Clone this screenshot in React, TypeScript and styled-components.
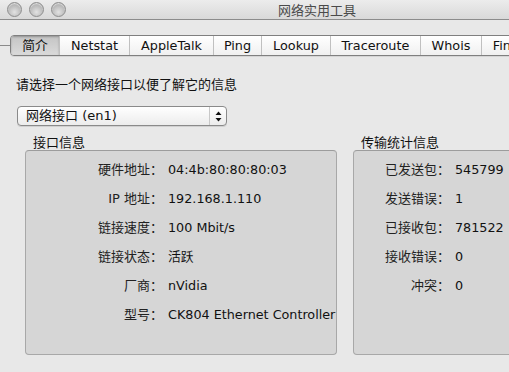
import * as React from "react";
import styled, { createGlobalStyle } from "styled-components";

const GlobalStyle = createGlobalStyle`
  html, body {
    margin: 0;
    padding: 0;
    overflow: hidden;
    background: #e8e8e8;
  }
  body {
    font-family: "DejaVu Sans", "Noto Sans CJK SC", sans-serif;
    font-size: 13px;
    color: #111;
  }
`;

type Row = { label: string; value: string };

const tabs = [
  { name: "简介", w: 48, active: true },
  { name: "Netstat", w: 70 },
  { name: "AppleTalk", w: 84 },
  { name: "Ping", w: 48 },
  { name: "Lookup", w: 69 },
  { name: "Traceroute", w: 90 },
  { name: "Whois", w: 61 },
  { name: "Finger", w: 62 },
];

const interfaceRows: Row[] = [
  { label: "硬件地址：", value: "04:4b:80:80:80:03" },
  { label: "IP 地址：", value: "192.168.1.110" },
  { label: "链接速度：", value: "100 Mbit/s" },
  { label: "链接状态：", value: "活跃" },
  { label: "厂商：", value: "nVidia" },
  { label: "型号：", value: "CK804 Ethernet Controller" },
];

const statRows: Row[] = [
  { label: "已发送包：", value: "545799" },
  { label: "发送错误：", value: "1" },
  { label: "已接收包：", value: "781522" },
  { label: "接收错误：", value: "0" },
  { label: "冲突：", value: "0" },
];

export default function App() {
  return (
    <>
      <GlobalStyle />
      <Window>
        <TitleBar>
          <Lights>
            <Light />
            <Light />
            <Light />
          </Lights>
          <Title>网络实用工具</Title>
        </TitleBar>

        <Body>
          <TabStrip>
            <Leader />
            <Segments>
              {tabs.map((t) => (
                <Tab key={t.name} $w={t.w} $active={!!t.active}>
                  {t.name}
                </Tab>
              ))}
            </Segments>
          </TabStrip>

          <Prompt>请选择一个网络接口以便了解它的信息</Prompt>

          <Popup>
            <PopupText>网络接口 (en1)</PopupText>
            <Stepper>
              <svg width="7" height="11" viewBox="0 0 7 11">
                <path d="M3.5 0.5 L6.5 4 L0.5 4 Z" fill="#111" />
                <path d="M3.5 10.5 L6.5 7 L0.5 7 Z" fill="#111" />
              </svg>
            </Stepper>
          </Popup>

          <Panels>
            <Group>
              <GroupLabel>接口信息</GroupLabel>
              <Box $w={312} $labelW={137}>
                {interfaceRows.map((r) => (
                  <React.Fragment key={r.label}>
                    <Label>{r.label}</Label>
                    <Value>{r.value}</Value>
                  </React.Fragment>
                ))}
              </Box>
            </Group>
            <Group>
              <GroupLabel>传输统计信息</GroupLabel>
              <Box $w={270} $labelW={96}>
                {statRows.map((r) => (
                  <React.Fragment key={r.label}>
                    <Label>{r.label}</Label>
                    <Value>{r.value}</Value>
                  </React.Fragment>
                ))}
              </Box>
            </Group>
          </Panels>
        </Body>
      </Window>
    </>
  );
}

const Window = styled.div`
  width: 634px;
  height: 372px;
  background: #e8e8e8;
  overflow: hidden;
`;

const TitleBar = styled.div`
  position: relative;
  height: 19px;
  display: flex;
  align-items: center;
  background: linear-gradient(#ececec, #d9d9d9);
  border-bottom: 1px solid #8c8c8c;
`;

const Lights = styled.div`
  display: flex;
  gap: 7px;
  padding-left: 7px;
`;

const Light = styled.div`
  width: 13px;
  height: 13px;
  border-radius: 50%;
  border: 1px solid #8e8e8e;
  background: radial-gradient(circle at 50% 70%, #e2e2e2 0%, #b9b9b9 60%, #a5a5a5 100%);
  box-shadow: inset 0 1px 1px rgba(255, 255, 255, 0.6);
`;

const Title = styled.div`
  position: absolute;
  left: 0;
  right: 0;
  text-align: center;
  font-family: "Noto Sans CJK SC", sans-serif;
  font-size: 13px;
  line-height: 19px;
  color: #4a4a4a;
`;

const Body = styled.div`
  padding-top: 15px;
`;

const TabStrip = styled.div`
  display: flex;
  align-items: center;
`;

const Leader = styled.div`
  width: 10px;
  height: 1px;
  background: #8a8a8a;
`;

const Segments = styled.div`
  display: flex;
  height: 19px;
  border: 1px solid #7f7f7f;
  border-radius: 4px;
  overflow: hidden;
  background: linear-gradient(#ffffff, #f0f0f0);
  box-shadow: 0 1px 0 rgba(0, 0, 0, 0.08);
`;

const Tab = styled.div<{ $w: number; $active: boolean }>`
  flex: none;
  width: ${(p) => p.$w}px;
  box-sizing: border-box;
  display: flex;
  align-items: center;
  justify-content: center;
  line-height: 19px;
  font-size: 12.8px;
  color: #111;
  border-left: 1px solid #c0c0c0;
  background: ${(p) =>
    p.$active ? "linear-gradient(#c4c4c4, #dadada)" : "transparent"};
  box-shadow: ${(p) => (p.$active ? "inset 0 1px 2px rgba(0,0,0,0.25)" : "none")};

  &:first-child {
    border-left: none;
  }
`;

const Prompt = styled.div`
  margin-top: 20px;
  padding-left: 16px;
  line-height: 16px;
  font-family: "Noto Sans CJK SC", sans-serif;
  font-size: 13px;
  color: #111;
`;

const Popup = styled.div`
  margin: 14px 0 0 17px;
  width: 210px;
  height: 20px;
  box-sizing: border-box;
  display: flex;
  border: 1px solid #8a8a8a;
  border-radius: 4px;
  background: linear-gradient(#ffffff, #ececec);
  box-shadow: 0 1px 0 rgba(0, 0, 0, 0.1);
`;

const PopupText = styled.div`
  flex: 1;
  padding-left: 8px;
  line-height: 18px;
  font-size: 13px;
  color: #111;
`;

const Stepper = styled.div`
  width: 16px;
  display: flex;
  align-items: center;
  justify-content: center;
  border-left: 1px solid #c8c8c8;
`;

const Panels = styled.div`
  display: flex;
  gap: 16px;
  margin-top: 8px;
  padding-left: 25px;
`;

const Group = styled.div`
  display: flex;
  flex-direction: column;
`;

const GroupLabel = styled.div`
  height: 16px;
  line-height: 16px;
  padding-left: 8px;
  font-family: "Noto Sans CJK SC", sans-serif;
  font-size: 13px;
  color: #111;
`;

const Box = styled.div<{ $w: number; $labelW: number }>`
  width: ${(p) => p.$w}px;
  height: 205px;
  box-sizing: border-box;
  padding-top: 4px;
  border: 1px solid #a8a8a8;
  border-top-color: #9c9c9c;
  border-radius: 4px;
  background: #d6d6d6;
  display: grid;
  grid-template-columns: ${(p) => p.$labelW}px 1fr;
  grid-auto-rows: 29px;
  align-content: start;
  column-gap: 5px;
`;

const Label = styled.div`
  text-align: right;
  line-height: 29px;
  white-space: nowrap;
  font-size: 13px;
  color: #222;
`;

const Value = styled.div`
  line-height: 29px;
  white-space: nowrap;
  font-size: 12.75px;
  color: #111;
`;
